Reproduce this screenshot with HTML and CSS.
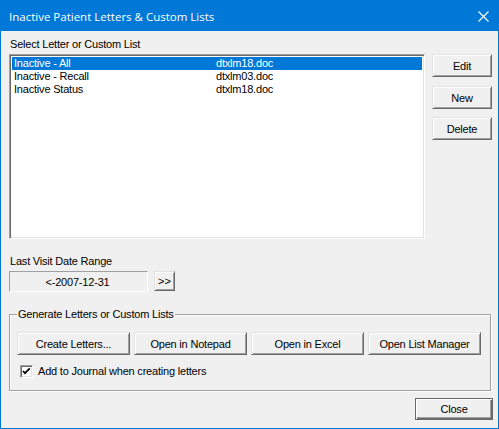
FILE: index.html
```html
<!DOCTYPE html>
<html>
<head>
<meta charset="utf-8">
<link rel="stylesheet" href="styles.css">
</head>
<body>
<div class="window">
  <div class="titlebar">
    <span class="title">Inactive Patient Letters &amp; Custom Lists</span>
    <svg class="close" width="11" height="11" viewBox="0 0 11 11"><path d="M0.5 0.5 L10.5 10.5 M10.5 0.5 L0.5 10.5" stroke="#fff" stroke-width="1.1" fill="none"/></svg>
  </div>
  <div class="content">
    <div class="label label-select">Select Letter or Custom List</div>
    <div class="top-row">
      <div class="listbox">
        <div class="row selected"><span class="col-name">Inactive - All</span><span>dtxlm18.doc</span></div>
        <div class="row"><span class="col-name">Inactive - Recall</span><span>dtxlm03.doc</span></div>
        <div class="row"><span class="col-name">Inactive Status</span><span>dtxlm18.doc</span></div>
      </div>
      <div class="side">
        <div class="btn btn-side">Edit</div>
        <div class="btn btn-side btn-new">New</div>
        <div class="btn btn-side btn-delete">Delete</div>
      </div>
    </div>
    <div class="label label-date">Last Visit Date Range</div>
    <div class="date-row">
      <div class="date-field">&lt;-2007-12-31</div>
      <div class="btn btn-small">&gt;&gt;</div>
    </div>
    <div class="group">
      <span class="group-label">Generate Letters or Custom Lists</span>
      <div class="group-buttons">
        <div class="btn btn-wide">Create Letters...</div>
        <div class="btn btn-wide">Open in Notepad</div>
        <div class="btn btn-wide">Open in Excel</div>
        <div class="btn btn-wide">Open List Manager</div>
      </div>
      <div class="check-row">
        <span class="checkbox"><svg width="9" height="9" viewBox="0 0 9 9"><path d="M1 4 L3 6.2 L7.8 1.4" stroke="#000" stroke-width="1.8" fill="none"/></svg></span>
        <span>Add to Journal when creating letters</span>
      </div>
    </div>
    <div class="footer">
      <div class="btn btn-default">Close</div>
    </div>
  </div>
</div>
</body>
</html>
```

FILE: styles.css
```css
* { box-sizing: border-box; }
html, body { margin: 0; padding: 0; background: #f0f0f0; }
.window {
  width: 499px;
  height: 429px;
  border: 1px solid #0078d7;
  background: #f0f0f0;
  font-family: "Liberation Sans", Arial, sans-serif;
  font-size: 11px;
  letter-spacing: -0.2px;
  color: #000;
}
.titlebar {
  height: 30px;
  background: #0078d7;
  color: #fff;
  display: flex;
  align-items: center;
  padding-left: 8px;
  padding-right: 9px;
  margin-top: -1px;
  margin-left: -1px;
  margin-right: -1px;
  padding-top: 1px;
  height: 31px;
}
.title {
  font-family: "Open Sans", "Liberation Sans", sans-serif;
  font-size: 11.5px;
  letter-spacing: 0;
  padding-left: 1px;
}
.close { margin-left: auto; margin-right: 1px; }
.content {
  padding: 7px 5px 0 8px;
}
.label { line-height: 13px; height: 13px; padding-left: 1px; }
.top-row {
  display: flex;
  margin-top: 3px;
}
.listbox {
  width: 416px;
  height: 185px;
  background: #fff;
  border: 1px solid;
  border-color: #a0a0a0 #fff #fff #a0a0a0;
  box-shadow: inset 1px 1px #696969, inset -1px -1px #e3e3e3;
  padding: 2px 2px 2px 2px;
}
.row {
  display: flex;
  height: 13px;
  line-height: 13px;
  padding-left: 2px;
  white-space: nowrap;
}
.row.selected { background: #0078d7; color: #fff; }
.col-name { width: 202px; }
.side {
  display: flex;
  flex-direction: column;
  margin-left: 7px;
}
.btn {
  display: flex;
  align-items: center;
  justify-content: center;
  background: #f0f0f0;
  border: 1px solid;
  border-color: #e3e3e3 #696969 #696969 #e3e3e3;
  box-shadow: inset 1px 1px #fff, inset -1px -1px #a0a0a0;
  white-space: nowrap;
}
.btn-side { width: 60px; height: 23px; }
.btn-new { margin-top: 9px; }
.btn-delete { margin-top: 8px; }
.label-date { margin-top: 16px; }
.date-row {
  display: flex;
  align-items: flex-start;
  margin-top: 3px;
}
.date-field {
  width: 139px;
  height: 21px;
  border: 1px solid;
  border-color: #a0a0a0 #fff #fff #a0a0a0;
  display: flex;
  align-items: center;
  justify-content: center;
  padding-right: 2px;
}
.btn-small { width: 21px; height: 20px; margin-left: 6px; letter-spacing: 0; }
.group {
  position: relative;
  margin-top: 22px;
  width: 482px;
  height: 77px;
  border: 1px solid #a0a0a0;
  box-shadow: inset 1px 1px #fff, 1px 1px #fff;
  padding: 17px 0 0 7px;
}
.group-label {
  position: absolute;
  top: -7px;
  left: 7px;
  padding: 0 1px;
  line-height: 13px;
  background: #f0f0f0;
}
.group-buttons { display: flex; gap: 4px; }
.btn-wide { width: 113px; height: 23px; }
.check-row {
  display: flex;
  align-items: center;
  gap: 5px;
  margin-top: 10px;
  padding-left: 3px;
  line-height: 13px;
}
.checkbox {
  width: 13px;
  height: 13px;
  background: #fff;
  border: 1px solid;
  border-color: #a0a0a0 #fff #fff #a0a0a0;
  box-shadow: inset 1px 1px #696969, inset -1px -1px #e3e3e3;
  display: flex;
  align-items: center;
  justify-content: center;
}
.checkbox svg { display: block; }
.footer {
  display: flex;
  justify-content: flex-end;
  margin-top: 7px;
}
.btn-default {
  width: 78px;
  height: 22px;
  border: 1px solid #696969;
  box-shadow: inset 1px 1px #fff, inset -1px -1px #696969, inset -2px -2px #a0a0a0;
}
```
